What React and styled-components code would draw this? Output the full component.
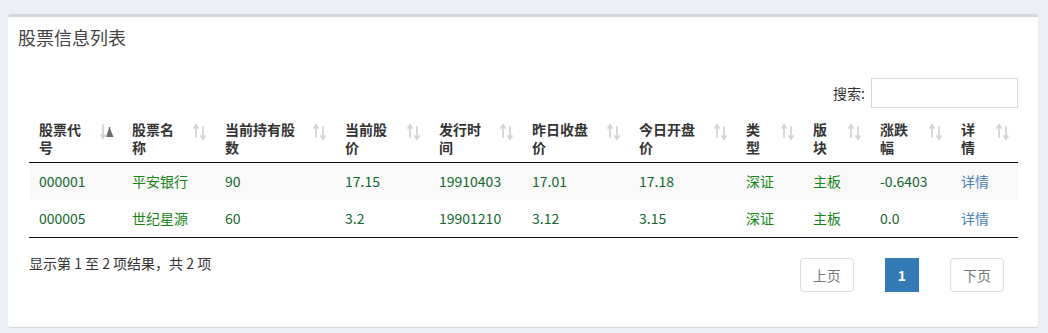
import React from "react";
import styled, { createGlobalStyle } from "styled-components";

const GlobalStyle = createGlobalStyle`
  html, body {
    margin: 0;
    padding: 0;
    background: #ecf0f5;
  }
  body {
    font-family: "Noto Sans CJK SC", "Liberation Sans", sans-serif;
    font-size: 14px;
    color: #333;
  }
  * { box-sizing: border-box; }
`;

const Page = styled.div`
  padding: 14px 10px 6px 8px;
`;

const Box = styled.div`
  background: #fff;
  border-top: 3px solid #d2d6de;
  border-radius: 3px;
  box-shadow: 0 1px 1px rgba(0, 0, 0, 0.12);
`;

const BoxHeader = styled.div`
  padding: 10px;
`;

const Title = styled.h3`
  margin: 0;
  font-size: 18px;
  line-height: 20px;
  font-weight: 400;
  color: #444;
`;

const BoxBody = styled.div`
  padding: 21px 20px 35px 21px;
`;

const FilterRow = styled.div`
  display: flex;
  justify-content: flex-end;
  align-items: center;
  height: 30px;
`;

const FilterLabel = styled.label`
  display: flex;
  align-items: center;
  gap: 6px;
  font-size: 14px;
  color: #333;
`;

const SearchInput = styled.input`
  width: 147px;
  height: 30px;
  border: 1px solid #d2d6de;
  border-radius: 0;
  padding: 4px 8px;
  font: inherit;
  outline: none;
`;

const Table = styled.table`
  width: 989px;
  margin-top: 3px;
  border-collapse: collapse;
  table-layout: fixed;
  border-bottom: 1px solid #111;
`;

const Col = styled.col`
  width: ${(p) => p.$w}px;
`;

const Th = styled.th`
  position: relative;
  text-align: left;
  vertical-align: bottom;
  padding: 9px 30px 6px 10px;
  font-size: 14px;
  line-height: 18px;
  font-weight: 700;
  color: #333;
  border-bottom: 1px solid #111;
`;

const SortIconWrap = styled.span`
  position: absolute;
  top: 11px;
  right: 7px;
  width: 16px;
  height: 19px;
  display: block;
`;

const Tr = styled.tr`
  background: ${(p) => (p.$striped ? "#f9f9f9" : "#fff")};
`;

const Td = styled.td`
  padding: 8px 10px;
  line-height: 21px;
  font-size: 14px;
  white-space: nowrap;
  overflow: hidden;
  color: ${(p) =>
    p.$kind === "link" ? "#4a7fb0" : p.$kind === "cjk" ? "#178517" : "#14662e"};
`;

const Footer = styled.div`
  display: flex;
  justify-content: space-between;
  align-items: flex-start;
  padding-top: 15px;
  padding-right: 14px;
`;

const Info = styled.div`
  font-size: 14px;
  line-height: 20px;
  color: #333;
`;

const Pagination = styled.div`
  display: flex;
  gap: 31px;
  margin-top: 5px;
`;

const PageButton = styled.span`
  display: inline-block;
  padding: 6px 12px;
  line-height: 20px;
  font-size: 14px;
  border: 1px solid ${(p) => (p.$active ? "#337ab7" : "#ddd")};
  border-radius: ${(p) => (p.$active ? "0" : "4px")};
  background: ${(p) => (p.$active ? "#337ab7" : "#fff")};
  color: ${(p) => (p.$active ? "#fff" : "#777")};
  font-weight: ${(p) => (p.$active ? 700 : 400)};
`;

const SortIcon = ({ asc }) => (
  <SortIconWrap>
    <svg width="16" height="19" viewBox="0 0 16 19">
      {asc ? (
        <>
          <g stroke="#cfcfcf" strokeWidth="1.6" fill="none" strokeLinecap="round">
            <line x1="4" y1="3" x2="4" y2="16" />
            <polyline points="2,13 4,16 6,13" />
          </g>
          <path d="M10.5 5 L14.5 15 L7 15 Z" fill="#6b6b6b" />
          <line x1="10.5" y1="5" x2="10.5" y2="15" stroke="#6b6b6b" strokeWidth="1.4" />
        </>
      ) : (
        <g stroke="#d4d4d4" strokeWidth="1.8" fill="none" strokeLinecap="round">
          <line x1="4" y1="3" x2="4" y2="15" />
          <polyline points="2,6 4,3 6,6" />
          <line x1="11" y1="5" x2="11" y2="17" />
          <polyline points="9,14 11,17 13,14" />
        </g>
      )}
    </svg>
  </SortIconWrap>
);

const columns = [
  { title: "股票代号", w: 93, asc: true },
  { title: "股票名称", w: 93 },
  { title: "当前持有股数", w: 120 },
  { title: "当前股价", w: 94 },
  { title: "发行时间", w: 93 },
  { title: "昨日收盘价", w: 107 },
  { title: "今日开盘价", w: 107 },
  { title: "类型", w: 67 },
  { title: "版块", w: 67 },
  { title: "涨跌幅", w: 81 },
  { title: "详情", w: 67 },
];

const kinds = ["num", "cjk", "num", "num", "num", "num", "num", "cjk", "cjk", "num", "link"];

const rows = [
  ["000001", "平安银行", "90", "17.15", "19910403", "17.01", "17.18", "深证", "主板", "-0.6403", "详情"],
  ["000005", "世纪星源", "60", "3.2", "19901210", "3.12", "3.15", "深证", "主板", "0.0", "详情"],
];

export default function App() {
  return (
    <>
      <GlobalStyle />
      <Page>
        <Box>
          <BoxHeader>
            <Title>股票信息列表</Title>
          </BoxHeader>
          <BoxBody>
            <FilterRow>
              <FilterLabel>
                搜索:
                <SearchInput type="search" />
              </FilterLabel>
            </FilterRow>
            <Table>
              <colgroup>
                {columns.map((c) => (
                  <Col key={c.title} $w={c.w} />
                ))}
              </colgroup>
              <thead>
                <tr>
                  {columns.map((c) => (
                    <Th key={c.title}>
                      {c.title}
                      <SortIcon asc={c.asc} />
                    </Th>
                  ))}
                </tr>
              </thead>
              <tbody>
                {rows.map((r, i) => (
                  <Tr key={r[0]} $striped={i % 2 === 0}>
                    {r.map((v, j) => (
                      <Td key={j} $kind={kinds[j]}>
                        {v}
                      </Td>
                    ))}
                  </Tr>
                ))}
              </tbody>
            </Table>
            <Footer>
              <Info>显示第 1 至 2 项结果，共 2 项</Info>
              <Pagination>
                <PageButton>上页</PageButton>
                <PageButton $active>1</PageButton>
                <PageButton>下页</PageButton>
              </Pagination>
            </Footer>
          </BoxBody>
        </Box>
      </Page>
    </>
  );
}
